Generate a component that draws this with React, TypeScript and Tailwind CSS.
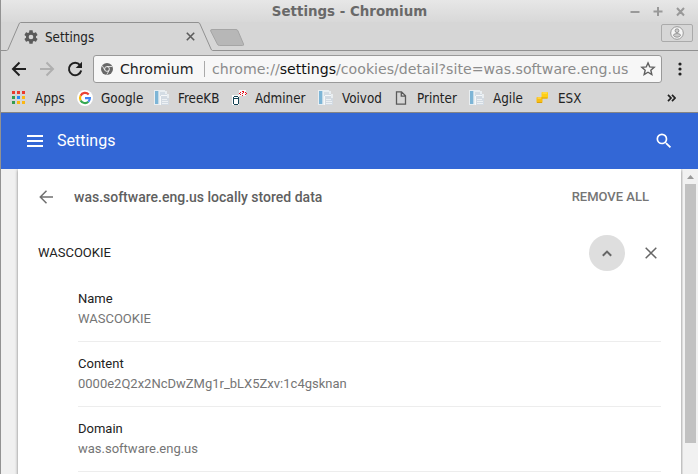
import type { ReactNode } from "react";

const PageIcon = () => (
  <svg width="16" height="16" viewBox="0 0 16 16" shapeRendering="crispEdges">
    <path d="M0 0h11v1h2v3h2v11H0z" fill="#e9eef1" />
    <path d="M1 1h3v13h-3z" fill="#7db5d6" />
    <path d="M4 1h1v13H4z" fill="#c5dbe8" />
    <path d="M6 2h5v2h2v2H6z" fill="#d3dce4" />
    <path d="M7 6h6v2h2v7H7z" fill="#d2dae2" />
    <path d="M6 6h1v9H6zM7 5h6v1H7z" fill="#f6f8f9" />
    <path d="M8 9h5v1H8zM8 11h6v1H8zM8 13h6v1H8z" fill="#edf1f4" />
  </svg>
);

const AppsIcon = () => (
  <svg width="16" height="16" viewBox="0 0 16 16" shapeRendering="crispEdges">
    <path d="M1 1h3v3H1zM6 1h3v3H6zM11 1h3v3h-3z" fill="#ea3a2d" />
    <path d="M1 6h3v3H1zM1 11h3v3H1z" fill="#349b50" />
    <path d="M6 6h3v3H6z" fill="#2787f5" />
    <path d="M11 6h3v3h-3zM6 11h3v3H6zM11 11h3v3h-3z" fill="#fbb713" />
  </svg>
);

const GoogleIcon = () => (
  <svg width="16" height="16" viewBox="0 0 16 16">
    <circle cx="8" cy="8" r="8" fill="#fff" />
    <g fill="none" strokeWidth="2.200">
      <path d="M11.700 4.400A5 5 0 0 0 3.600 5.700" stroke="#ea4335" />
      <path d="M3.600 5.700A5 5 0 0 0 3.600 10.400" stroke="#fbbc05" />
      <path d="M3.600 10.400A5 5 0 0 0 11.400 11.700" stroke="#34a853" />
      <path d="M8 8.100h4.900A5 5 0 0 1 11.400 11.700" stroke="#4285f4" />
    </g>
  </svg>
);

const AdminerIcon = () => (
  <svg width="16" height="16" viewBox="0 0 16 16" shapeRendering="crispEdges">
    <path d="M1 5h7v10H1zM8 0h7v6H8z" fill="#fff" opacity=".85" />
    <path d="M3 6h4v1H3zM2 7h1v7H2zM7 7h1v7H7zM3 8h4v1H3zM3 14h4v1H3z" fill="#174455" />
    <path d="M3 7h4v1H3zM3 9h4v5H3z" fill="#fff" />
    <path d="M8 3h1v1H8zM9 2h1v1H9zM9 4h1v1H9zM11 1h2v1h-2zM12 2h1v1h-1zM11 3h1v1h-1zM11 5h1v1h-1zM14 2h1v1h-1zM15 3h1v1h-1zM14 4h1v1h-1z" fill="#e8101c" />
  </svg>
);

const FileIcon = () => (
  <svg width="16" height="16" viewBox="0 0 16 16">
    <path d="M3.500 1.800h5l4 4v8.400h-9zM8.300 1.800v4.300h4.200" fill="none" stroke="#5a5a5a" strokeWidth="1.300" />
  </svg>
);

const EsxIcon = () => (
  <svg width="16" height="16" viewBox="0 0 16 16">
    <rect x="7.500" y="2" width="6.500" height="6.500" rx="1" fill="#ffcf16" />
    <rect x="2.500" y="7" width="6" height="6" rx="1" fill="#f8bd13" />
    <path d="M8 8h5.500M3 12.500h5" stroke="#dba10b" />
    <path d="M8.500 3h4.500M3.500 8h3.500" stroke="#ffe371" />
  </svg>
);

type BookmarkProps = { icon: ReactNode; label: string; className: string };

const Bookmark = ({ icon, label, className }: BookmarkProps) => (
  <div className={`flex shrink-0 items-center gap-2 ${className}`}>
    {icon}
    <span className="mt-0.5 whitespace-nowrap">{label}</span>
  </div>
);

const TitleBar = () => (
  <div className="grid h-[22px] grid-cols-[1fr_auto_1fr] items-center bg-linear-to-b from-[#e7e7e7] to-[#d8d8d8] font-['DejaVu_Sans'] text-[13.400px] font-bold text-[#696969]">
    <span />
    <span className="mt-0.5 whitespace-nowrap">Settings - Chromium</span>
    <svg className="justify-self-end" width="70" height="22" viewBox="0 0 70 22">
      <path d="M2.500 12h9M25.500 11.500h9M30 7v9M49 8l7 7.500M56 8l-7 7.500" fill="none" stroke="#999" strokeWidth="2" />
    </svg>
  </div>
);

const TabStrip = () => (
  <div className="relative flex h-[29px] items-center bg-[#d6d6d6] pl-[22px] text-[13.333px]">
    <svg className="absolute top-0 left-0" width="697" height="29" viewBox="0 0 697 29">
      <path d="M0 28.500h5.500q1 0 1.500-1L18 2q.6-1.500 1.500-1.500H197q1.500 0 2 1.500l11 25q.6 1.500 1.500 1.500H697" fill="none" stroke="#919191" />
      <path d="M211 7.500h24q1.500 0 2 1.500l5.500 13q.6 1.500-1 1.500h-23q-1.600 0-2.200-1.500L209.700 9q-.5-1.500 1.300-1.500z" fill="#b7b7b7" stroke="#a5a5a5" />
    </svg>
    <svg className="relative" width="16" height="16" viewBox="0 0 24 24" fill="#5a5a5a">
      <path d="M19.430 12.980c.04-.32.07-.64.07-.98s-.03-.66-.07-.98l2.110-1.650c.19-.15.24-.42.12-.64l-2-3.460c-.12-.22-.39-.3-.61-.22l-2.490 1c-.52-.4-1.080-.73-1.690-.98l-.38-2.650C14.460 2.180 14.250 2 14 2h-4c-.25 0-.46.18-.49.42l-.38 2.650c-.61.25-1.170.59-1.690.98l-2.490-1c-.23-.09-.49 0-.61.22l-2 3.460c-.13.22-.07.49.12.64l2.110 1.650c-.04.32-.07.65-.07.98s.03.66.07.98l-2.110 1.650c-.19.15-.24.42-.12.64l2 3.460c.12.22.39.3.61.22l2.490-1c.52.4 1.080.73 1.690.98l.38 2.650c.03.24.24.42.49.42h4c.25 0 .46-.18.49-.42l.38-2.650c.61-.25 1.170-.59 1.690-.98l2.490 1c.23.09.49 0 .61-.22l2-3.460c.12-.22.07-.49-.12-.64zM12 15.500A3.500 3.500 0 1 1 12 8.500a3.500 3.500 0 0 1 0 7z" />
    </svg>
    <span className="relative mt-0.5 ml-1.5 w-[141px] text-[#222]">Settings</span>
    <svg className="relative" width="9" height="9" viewBox="0 0 9 9">
      <path d="M.8.8l7.400 7.400M8.200.8L.8 8.200" stroke="#5c5c5c" strokeWidth="1.600" />
    </svg>
    <div className="relative mr-[5px] ml-auto flex h-[18px] w-8 -translate-y-1 items-center justify-center rounded-[2px] border border-[#aaa]">
      <svg width="14" height="14" viewBox="0 0 14 14">
        <circle cx="7" cy="7" r="6.300" fill="#f5f5f5" stroke="#999" />
        <circle cx="7" cy="4.700" r="1.900" fill="#ccc" stroke="#888" strokeWidth=".8" />
        <path d="M3.400 9.500q0-2 3.600-2t3.600 2q-1.200 1.700-3.600 1.700T3.400 9.500z" fill="#ccc" stroke="#888" strokeWidth=".8" />
      </svg>
    </div>
  </div>
);

const Toolbar = () => (
  <div className="flex h-9 items-center bg-[#d6d6d6] pl-[10px]">
    <svg width="16" height="16" viewBox="0 0 16 16" fill="none" stroke="#202020" strokeWidth="2">
      <path d="M15 8H2.500M8.500 1.500L2 8l6.500 6.500" />
    </svg>
    <svg className="ml-3" width="16" height="16" viewBox="0 0 16 16" fill="none" stroke="#afafaf" strokeWidth="2">
      <path d="M1 8h12.500M7.500 1.500L14 8l-6.500 6.500" />
    </svg>
    <svg className="ml-3" width="16" height="16" viewBox="0 0 16 16">
      <path d="M13 4.100A6.200 6.200 0 1 0 14.200 9.500" fill="none" stroke="#202020" strokeWidth="2" />
      <path d="M15 .7V7H8.700z" fill="#202020" />
    </svg>
    <div className="ml-[10px] flex h-7 w-[569px] items-center rounded-[3px] border border-[#999] bg-[#f7f7f7] font-['DejaVu_Sans'] text-[14.150px] whitespace-nowrap">
      <svg className="ml-[7px] shrink-0" width="12" height="12" viewBox="0 0 12 12">
        <circle cx="6" cy="6" r="6" fill="#686868" />
        <circle cx="6" cy="6" r="2.400" fill="#686868" stroke="#f7f7f7" strokeWidth=".9" />
        <path d="M6 3.500h5.200M3.850 7.300L1.300 2.800M8.150 7.300L5.700 11.800" stroke="#f7f7f7" strokeWidth=".8" />
      </svg>
      <span className="mt-px ml-[7px] w-[84px] shrink-0 text-[#222]">Chromium</span>
      <span className="h-4 w-px shrink-0 bg-[#aaa]" />
      <span className="mt-px ml-[7px] w-[428px] shrink-0 text-[#8b8b8b]">
        chrome://<span className="text-[#111]">settings</span>/cookies/detail?site=was.software.eng.us
      </span>
      <svg className="shrink-0" width="16" height="16" viewBox="0 0 16 16">
        <path d="M8 1.900l1.750 4.050 4.400.4-3.320 2.900 1 4.300L8 11.250l-3.830 2.300 1-4.300-3.320-2.900 4.400-.4z" fill="none" stroke="#606060" strokeWidth="1.400" />
      </svg>
    </div>
    <svg className="ml-4" width="4" height="14" viewBox="0 0 4 14" fill="#222">
      <circle cx="2" cy="2" r="1.600" />
      <circle cx="2" cy="7" r="1.600" />
      <circle cx="2" cy="12" r="1.600" />
    </svg>
  </div>
);

const BookmarksBar = () => (
  <div className="flex h-[26px] items-center border-b border-[#858585] bg-[#d6d6d6] pb-[3px] pl-[10px] text-[13.333px] text-[#222]">
    <Bookmark icon={<AppsIcon />} label="Apps" className="w-[66px]" />
    <Bookmark icon={<GoogleIcon />} label="Google" className="w-[77px]" />
    <Bookmark icon={<PageIcon />} label="FreeKB" className="w-[77px]" />
    <Bookmark icon={<AdminerIcon />} label="Adminer" className="w-[87px]" />
    <Bookmark icon={<PageIcon />} label="Voivod" className="w-[75px]" />
    <Bookmark icon={<FileIcon />} label="Printer" className="w-[76px]" />
    <Bookmark icon={<PageIcon />} label="Agile" className="w-[65px]" />
    <Bookmark icon={<EsxIcon />} label="ESX" className="w-[60px]" />
    <svg className="mr-[22px] ml-auto" width="9" height="8" viewBox="0 0 9 8">
      <path d="M1 .8L4 4 1 7.200M5 .8L8 4 5 7.200" fill="none" stroke="#222" strokeWidth="1.700" />
    </svg>
  </div>
);

const details = [
  { label: "Name", value: "WASCOOKIE" },
  { label: "Content", value: "0000e2Q2x2NcDwZMg1r_bLX5Zxv:1c4gsknan" },
  { label: "Domain", value: "was.software.eng.us" },
];

const App = () => {
  return (
    <div className="flex h-[474px] w-[698px] flex-col overflow-hidden border-l border-[#929292] bg-[#f0f0f0] font-['DejaVu_Sans_Condensed','DejaVu_Sans',sans-serif] text-[13px]">
      <TitleBar />
      <TabStrip />
      <Toolbar />
      <BookmarksBar />

      <header className="flex h-14 shrink-0 items-center bg-[#3367d6] pl-[26px] font-['Roboto'] text-base text-white">
        <svg width="16" height="12" viewBox="0 0 16 12" fill="#fff">
          <path d="M0 0h16v2H0zM0 5h16v2H0zM0 10h16v2H0z" />
        </svg>
        <h1 className="ml-[14px]">Settings</h1>
        <svg className="mr-[24px] ml-auto" width="20" height="20" viewBox="0 0 24 24" fill="#fff">
          <path d="M15.500 14h-.79l-.28-.27A6.471 6.471 0 0 0 16 9.500 6.500 6.500 0 1 0 9.500 16c1.610 0 3.090-.59 4.230-1.570l.27.28v.79l5 4.990L20.490 19l-4.990-5zm-6 0C7.010 14 5 11.990 5 9.500S7.010 5 9.500 5 14 7.010 14 9.500 11.990 14 9.500 14z" />
        </svg>
      </header>

      <div className="flex min-h-0 flex-1 overflow-hidden font-['Roboto'] text-[13px] leading-5">
        <main className="ml-[17px] h-[400px] w-[663px] shrink-0 bg-white pl-5 shadow-[0_1px_3px_rgba(0,0,0,0.5)]">
          <div className="flex h-14 items-center text-[#5f5f5f]">
            <svg width="16" height="16" viewBox="0 0 16 16" fill="none" stroke="#707070" strokeWidth="1.500">
              <path d="M15 8H2.500M8.500 1.800L2.300 8l6.200 6.200" />
            </svg>
            <h2 className="ml-5 text-[14px] font-medium">was.software.eng.us locally stored data</h2>
            <button className="mr-8 ml-auto font-medium text-[#757575]">REMOVE ALL</button>
          </div>
          <div className="mt-1 flex h-12 items-center text-[#222]">
            <span>WASCOOKIE</span>
            <button className="ml-auto flex size-9 items-center justify-center rounded-full bg-[#dedede]">
              <svg width="10" height="7" viewBox="0 0 10 7">
                <path d="M.8 5.800L5 1.600l4.200 4.200" fill="none" stroke="#666" strokeWidth="2" />
              </svg>
            </button>
            <svg className="mr-6 ml-5" width="12" height="12" viewBox="0 0 12 12">
              <path d="M.7.700l10.600 10.600M11.300.7L.7 11.300" stroke="#666" strokeWidth="1.500" />
            </svg>
          </div>
          <div className="mr-5 ml-10">
            {details.map((item) => (
              <div key={item.label} className="border-b border-[#ededed] py-3">
                <div className="text-[#222]">{item.label}</div>
                <div className="text-[#757575]">{item.value}</div>
              </div>
            ))}
          </div>
        </main>
        <div className="relative ml-[2px] flex w-[15px] flex-col items-center bg-[#f1f1f1]">
          <svg className="my-[6px] shrink-0" width="7" height="4" viewBox="0 0 7 4">
            <path d="M0 4L3.500 0 7 4z" fill="#999" />
          </svg>
          <div className="-mt-px h-[259px] w-[11px] shrink-0 bg-[#c1c1c1]" />
        </div>
      </div>
    </div>
  );
};

export default App;
